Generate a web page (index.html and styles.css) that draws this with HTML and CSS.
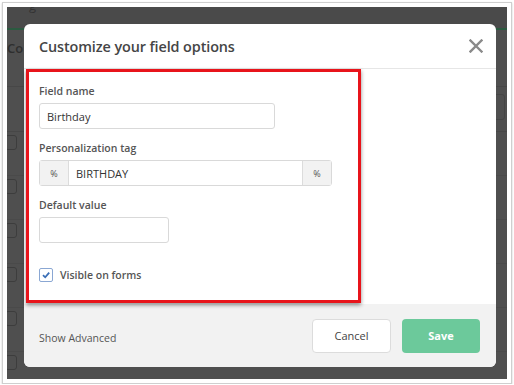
FILE: index.html
```html
<!DOCTYPE html>
<html lang="en">
<head>
    <meta charset="UTF-8">
    <meta name="viewport" content="width=device-width, initial-scale=1.0">
    <title>Customize your field options</title>
    <link rel="stylesheet" href="styles.css">
</head>
<body>
    <div class="frame">
        <div class="backdrop">
            <div class="app">
                <div class="app-top"><span class="app-crumb">g</span></div>
                <div class="app-tabs"></div>
                <div class="app-title">Co</div>
                <div class="app-head"><span class="app-select"></span></div>
                <div class="app-row"><span class="app-box"></span></div>
                <div class="app-row"><span class="app-box"></span></div>
                <div class="app-row"><span class="app-box"></span></div>
                <div class="app-row"><span class="app-box"></span></div>
                <div class="app-row"><span class="app-box"></span></div>
                <div class="app-row"><span class="app-box"></span></div>
            </div>

            <div class="modal">
                <div class="modal-header">
                    <h2 class="modal-title">Customize your field options</h2>
                    <button class="modal-close" aria-label="Close">
                        <svg width="14" height="14" viewBox="0 0 14 14">
                            <path d="M1.5 1.5 L12.5 12.5 M12.5 1.5 L1.5 12.5" stroke="#8a8a8a" stroke-width="2.4" stroke-linecap="square"/>
                        </svg>
                    </button>
                </div>

                <div class="modal-body">
                    <div class="field">
                        <label class="field-label">Field name</label>
                        <input class="input input-name" type="text" value="Birthday">
                    </div>
                    <div class="field">
                        <label class="field-label">Personalization tag</label>
                        <div class="input-group">
                            <span class="addon">%</span>
                            <input class="input input-tag" type="text" value="BIRTHDAY">
                            <span class="addon">%</span>
                        </div>
                    </div>
                    <div class="field">
                        <label class="field-label">Default value</label>
                        <input class="input input-default" type="text" value="">
                    </div>
                    <label class="check">
                        <span class="check-box">
                            <svg width="10" height="10" viewBox="0 0 10 10">
                                <path d="M2 5.2 L4.2 7.3 L8.2 2.6" fill="none" stroke="#3b6fb6" stroke-width="1.8"/>
                            </svg>
                        </span>
                        Visible on forms
                    </label>
                </div>

                <div class="modal-footer">
                    <a class="show-advanced">Show Advanced</a>
                    <div class="actions">
                        <button class="btn btn-cancel">Cancel</button>
                        <button class="btn btn-save">Save</button>
                    </div>
                </div>

                <div class="highlight"></div>
            </div>
        </div>
    </div>
</body>
</html>
```
FILE: styles.css
```css
body {
    margin: 0;
    background-color: #ffffff;
    font-family: 'Open Sans', 'Liberation Sans', sans-serif;
}

.frame {
    margin: 2px 2px 0 2px;
    border: 1px solid #cfcfcf;
    padding: 4px 4px 4px 4px;
    width: 500px;
    box-shadow: 0 1px 2px rgba(0, 0, 0, 0.2);
}

.backdrop {
    position: relative;
    height: 372px;
    background-color: #4f4f4f;
    overflow: hidden;
}

/* dimmed page behind the dialog */
.app-top {
    display: flow-root;
    height: 21px;
    background-color: #4a4a4a;
}

.app-crumb {
    display: block;
    margin-left: 22px;
    margin-top: -11px;
    font-size: 13px;
    line-height: 18px;
    color: #333;
}

.app-tabs {
    height: 2px;
    background-color: #2b5a40;
}

.app-title {
    height: 56px;
    line-height: 36px;
    font-size: 13px;
    font-weight: 600;
    color: #2e2e2e;
    border-bottom: 1px solid #474747;
}

.app-head {
    height: 44px;
    border-bottom: 1px solid #474747;
    position: relative;
}

.app-select {
    position: absolute;
    right: 2px;
    top: 7px;
    width: 24px;
    height: 24px;
    border: 1px solid #454545;
    border-radius: 3px;
}

.app-row {
    height: 43px;
    border-bottom: 1px solid #4a4a4a;
    display: flex;
    align-items: flex-start;
}

.app-box {
    width: 10px;
    height: 13px;
    margin-left: -2px;
    margin-top: 3px;
    border: 1px solid #3d3d3d;
    border-radius: 3px;
}

/* dialog */
.modal {
    position: absolute;
    left: 17px;
    top: 17px;
    width: 472px;
    height: 343px;
    background-color: #fff;
    border-radius: 6px;
    display: flex;
    flex-direction: column;
}

.modal-header {
    height: 44px;
    border-bottom: 1px solid #e6e6e6;
    display: flex;
    align-items: center;
    justify-content: space-between;
    padding: 0 13px 0 15px;
}

.modal-title {
    margin: 0;
    font-size: 14.4px;
    font-weight: 600;
    color: #454545;
    letter-spacing: -0.1px;
}

.modal-close {
    border: none;
    background: none;
    padding: 0;
    width: 14px;
    height: 14px;
    cursor: pointer;
}

.modal-body {
    flex: 1;
    padding: 15px 15px 0 15px;
}

.field {
    margin-bottom: 12px;
}

.field-label {
    display: block;
    font-size: 10.5px;
    font-weight: 600;
    color: #555;
    margin-bottom: 5px;
    line-height: 14px;
}

.input {
    box-sizing: border-box;
    height: 26px;
    border: 1px solid #d9d9d9;
    border-radius: 3px;
    padding: 0 7px;
    font-family: inherit;
    font-size: 11px;
    color: #333;
    background: #fff;
}

.input-name {
    width: 236px;
}

.input-default {
    width: 130px;
}

.input-group {
    display: flex;
    width: 293px;
    height: 26px;
    border: 1px solid #d9d9d9;
    border-radius: 3px;
    box-sizing: border-box;
}

.addon {
    width: 28px;
    background-color: #f2f2f2;
    font-size: 9px;
    color: #555;
    display: flex;
    align-items: center;
    justify-content: center;
}

.addon:first-child {
    border-right: 1px solid #dcdcdc;
}

.addon:last-child {
    border-left: 1px solid #dcdcdc;
}

.input-tag {
    flex: 1;
    border: none;
    border-radius: 0;
    height: 24px;
}

.check {
    display: flex;
    align-items: center;
    gap: 7px;
    margin-top: 25px;
    font-size: 10.5px;
    font-weight: 600;
    color: #555;
}

.check-box {
    box-sizing: border-box;
    width: 14px;
    height: 14px;
    border: 1px solid #8aa7d3;
    border-radius: 2px;
    display: flex;
    align-items: center;
    justify-content: center;
}

.modal-footer {
    height: 63px;
    background-color: #f2f2f2;
    border-radius: 0 0 6px 6px;
    display: flex;
    align-items: center;
    justify-content: space-between;
    padding: 0 16px 0 15px;
}

.show-advanced {
    font-size: 10.5px;
    color: #555;
    margin-top: 4px;
}

.actions {
    display: flex;
    gap: 11px;
}

.btn {
    height: 34px;
    border-radius: 4px;
    font-family: inherit;
    font-size: 11px;
    cursor: pointer;
}

.btn-cancel {
    width: 79px;
    background-color: #fff;
    border: 1px solid #dcdcdc;
    color: #444;
}

.btn-save {
    width: 78px;
    background-color: #6cc99b;
    border: none;
    color: #fff;
    font-weight: 700;
}

/* annotation drawn over the form */
.highlight {
    position: absolute;
    left: 2px;
    top: 45px;
    width: 335px;
    height: 234px;
    box-sizing: border-box;
    border: 3px solid #e8141b;
    box-shadow: 0 2px 4px rgba(0, 0, 0, 0.45);
    pointer-events: none;
}
```
